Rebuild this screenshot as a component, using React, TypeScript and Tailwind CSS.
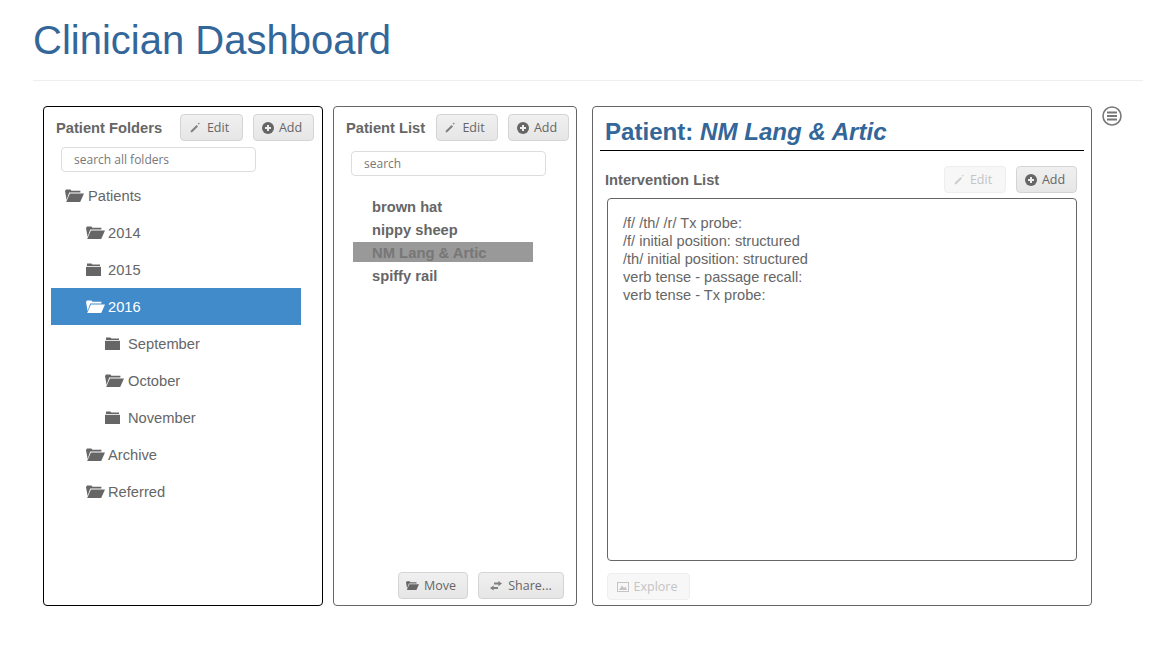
import type { ReactNode } from "react";

const FolderOpen = ({ className = "w-[19px] h-[13px]" }: { className?: string }) => (
  <svg viewBox="0 0 19 13" className={`fill-current ${className}`}>
    <path d="M0 2 L1 0.4 H5.4 L6.4 1.8 H15.4 V3.6 H4.2 L1.6 11 Z" />
    <path d="M4.9 4.6 H19 L15.2 13 H1.2 Z" />
  </svg>
);

const FolderClosed = () => (
  <svg viewBox="0 0 15 13" className="w-[15px] h-[13px] fill-current">
    <path d="M1 0.4 H5.4 L6.4 1.6 H14 V3 H1 Z" />
    <path d="M0 3.8 H15 V13 H0 Z" />
  </svg>
);

const Pencil = () => (
  <svg viewBox="0 0 11 11" className="w-[11px] h-[11px] fill-current opacity-80">
    <path d="M0.6 10.4 L1 8.6 L6.6 3 L8 4.4 L2.4 10 Z" />
    <path d="M8.8 0.4 l0.4 0.9 0.9 0.4 -0.9 0.4 -0.4 0.9 -0.4 -0.9 -0.9 -0.4 0.9 -0.4 z" />
  </svg>
);

const PlusCircle = () => (
  <svg viewBox="0 0 12 12" className="w-[12px] h-[12px]">
    <circle cx="6" cy="6" r="6" className="fill-current" />
    <path d="M3 6 H9 M6 3 V9" stroke="#eee" strokeWidth="2" />
  </svg>
);

const Transfer = () => (
  <svg viewBox="0 0 12 10" className="w-[12px] h-[10px] fill-current opacity-80">
    <path d="M12 2.6 L8.4 0 V1.6 H4 V3.6 H8.4 V5.2 Z" />
    <path d="M0 7 L3.6 4.6 V6 H8 V8 H3.6 V9.6 Z" />
  </svg>
);

const Picture = () => (
  <svg viewBox="0 0 12 10" className="w-[12px] h-[10px]">
    <rect x="0.5" y="0.5" width="11" height="9" className="fill-none stroke-current" />
    <path d="M2 8 L5 3.5 L7 6 L8.4 4.6 L10 8 Z" className="fill-current" />
  </svg>
);

const Btn = ({
  icon,
  label,
  disabled,
  className = "",
}: {
  icon: ReactNode;
  label: string;
  disabled?: boolean;
  className?: string;
}) => (
  <button
    type="button"
    className={`h-[27px] flex items-center justify-center gap-[5px] rounded-[4px] border text-[12.5px] font-['Open_Sans',sans-serif] ${
      disabled
        ? "border-[#eeeeee] bg-[#f7f7f7] text-[#c4c4c4]"
        : "border-[#d4d4d4] bg-gradient-to-b from-[#f0f0f0] to-[#e6e6e6] text-[#666]"
    } ${className}`}
  >
    {icon}
    <span className="pt-[2px]">{label}</span>
  </button>
);

const folders = [
  { name: "Patients", open: true, depth: 0 },
  { name: "2014", open: true, depth: 1 },
  { name: "2015", open: false, depth: 1 },
  { name: "2016", open: true, depth: 1, active: true },
  { name: "September", open: false, depth: 2 },
  { name: "October", open: true, depth: 2 },
  { name: "November", open: false, depth: 2 },
  { name: "Archive", open: true, depth: 1 },
  { name: "Referred", open: true, depth: 1 },
];

const patients = ["brown hat", "nippy sheep", "NM Lang & Artic", "spiffy rail"];

const interventions = [
  "/f/ /th/ /r/ Tx probe:",
  "/f/ initial position: structured",
  "/th/ initial position: structured",
  "verb tense - passage recall:",
  "verb tense - Tx probe:",
];

const SearchBox = ({ text, className = "" }: { text: string; className?: string }) => (
  <div
    className={`w-[195px] h-[25px] flex items-center pl-3 rounded-[4px] border border-[#dddddd] text-[12px] text-[#777] font-['Open_Sans',sans-serif] ${className}`}
  >
    {text}
  </div>
);

export default function App() {
  return (
    <div className="w-[1171px] h-[665px] bg-white pl-[33px] pr-[28px] font-['Liberation_Sans',Arial,sans-serif] text-[#666]">
      <h1 className="pt-[18px] h-[81px] border-b border-[#eeeeee] text-[40px] leading-[44px] text-[#336699]">
        Clinician Dashboard
      </h1>

      <div className="flex items-start mt-[25px] ml-[10px]">
        {/* folders */}
        <div className="w-[280px] h-[500px] shrink-0 rounded-[4px] border border-black px-[7px] pt-[7px]">
          <div className="flex items-center h-[27px] pl-[5px]">
            <span className="w-[124px] pt-[1px] text-[14.7px] font-bold text-[#666]">Patient Folders</span>
            <Btn icon={<Pencil />} label="Edit" className="w-[63px] gap-[6px] pr-[4px]" />
            <Btn icon={<PlusCircle />} label="Add" className="w-[61px] ml-[10px] pr-[3px]" />
          </div>
          <SearchBox text="search all folders" className="mt-[6px] ml-[10px]" />
          <div className="mt-[5px]">
            {folders.map((f) => (
              <div
                key={f.name}
                className={`w-[250px] h-[37px] flex items-center text-[14.7px] ${
                  f.active ? "bg-[#428bca] text-white" : "text-[#666]"
                } ${f.depth === 0 ? "pl-[14px]" : f.depth === 1 ? "pl-[35px]" : "pl-[54px]"}`}
              >
                <span className={`flex ${f.depth === 1 ? "w-[22px]" : "w-[23px]"}`}>
                  {f.open ? <FolderOpen /> : <FolderClosed />}
                </span>
                <span className="pt-[1px]">{f.name}</span>
              </div>
            ))}
          </div>
        </div>

        {/* patients */}
        <div className="w-[244px] h-[500px] shrink-0 ml-[10px] rounded-[4px] border border-[#666] px-[7px] pt-[7px] flex flex-col">
          <div className="flex items-center h-[27px] pl-[5px]">
            <span className="w-[90px] pt-[1px] text-[14.7px] font-bold text-[#666]">Patient List</span>
            <Btn icon={<Pencil />} label="Edit" className="w-[62px] gap-[6px] pr-[4px]" />
            <Btn icon={<PlusCircle />} label="Add" className="w-[61px] ml-[10px] pr-[3px]" />
          </div>
          <SearchBox text="search" className="mt-[10px] ml-[10px]" />
          <div className="mt-[20px] ml-[12px]">
            {patients.map((p) =>
              p === "NM Lang & Artic" ? (
                <div
                  key={p}
                  className="w-[180px] h-[20px] mb-[3px] pl-[19px] pt-[3px] flex items-center text-[14.8px] font-bold bg-[#999999] text-[#777]"
                >
                  {p}
                </div>
              ) : (
                <div key={p} className="w-[180px] h-[23px] pl-[19px] flex items-center text-[14.7px] font-bold text-[#666]">
                  {p}
                </div>
              )
            )}
          </div>
          <div className="mt-auto mb-[6px] flex justify-end gap-[10px] pr-[5px]">
            <Btn
              icon={<FolderOpen className="w-[13px] h-[9px]" />}
              label="Move"
              className="w-[70px] h-[26px] pr-[4px]"
            />
            <Btn icon={<Transfer />} label="Share..." className="w-[86px] h-[26px] gap-[6px]" />
          </div>
        </div>

        {/* detail */}
        <div className="w-[500px] h-[500px] shrink-0 ml-[15px] rounded-[4px] border border-[#666] px-[7px] flex flex-col">
          <h2 className="h-[44px] pt-[10px] pl-[5px] border-b border-black text-[24.1px] leading-[30px] font-bold text-[#336699]">
            Patient: <em>NM Lang &amp; Artic</em>
          </h2>
          <div className="flex items-center h-[27px] mt-[15px] pl-[5px] pr-[7px]">
            <span className="flex-1 pt-[1px] text-[14.7px] font-bold text-[#666]">Intervention List</span>
            <Btn disabled icon={<Pencil />} label="Edit" className="w-[62px] pr-[4px]" />
            <Btn icon={<PlusCircle />} label="Add" className="w-[61px] ml-[10px] pr-[3px]" />
          </div>
          <div className="w-[470px] h-[363px] mt-[5px] ml-[7px] rounded-[4px] border border-[#666] pt-[15px] pl-[15px] text-[14.6px] leading-[18px] text-[#666]">
            {interventions.map((t) => (
              <div key={t}>{t}</div>
            ))}
          </div>
          <Btn
            disabled
            icon={<Picture />}
            label="Explore"
            className="w-[83px] h-[26px] mt-[12px] ml-[7px] pr-[3px]"
          />
        </div>

        {/* menu icon */}
        <svg viewBox="0 0 20 20" className="w-[20px] h-[20px] ml-[10px] shrink-0 text-[#777]">
          <circle cx="10" cy="10" r="9" fill="none" stroke="currentColor" strokeWidth="1.6" />
          <path d="M5 6.5 H15 M5 10 H15 M5 13.5 H15" stroke="currentColor" strokeWidth="2" />
        </svg>
      </div>
    </div>
  );
}
